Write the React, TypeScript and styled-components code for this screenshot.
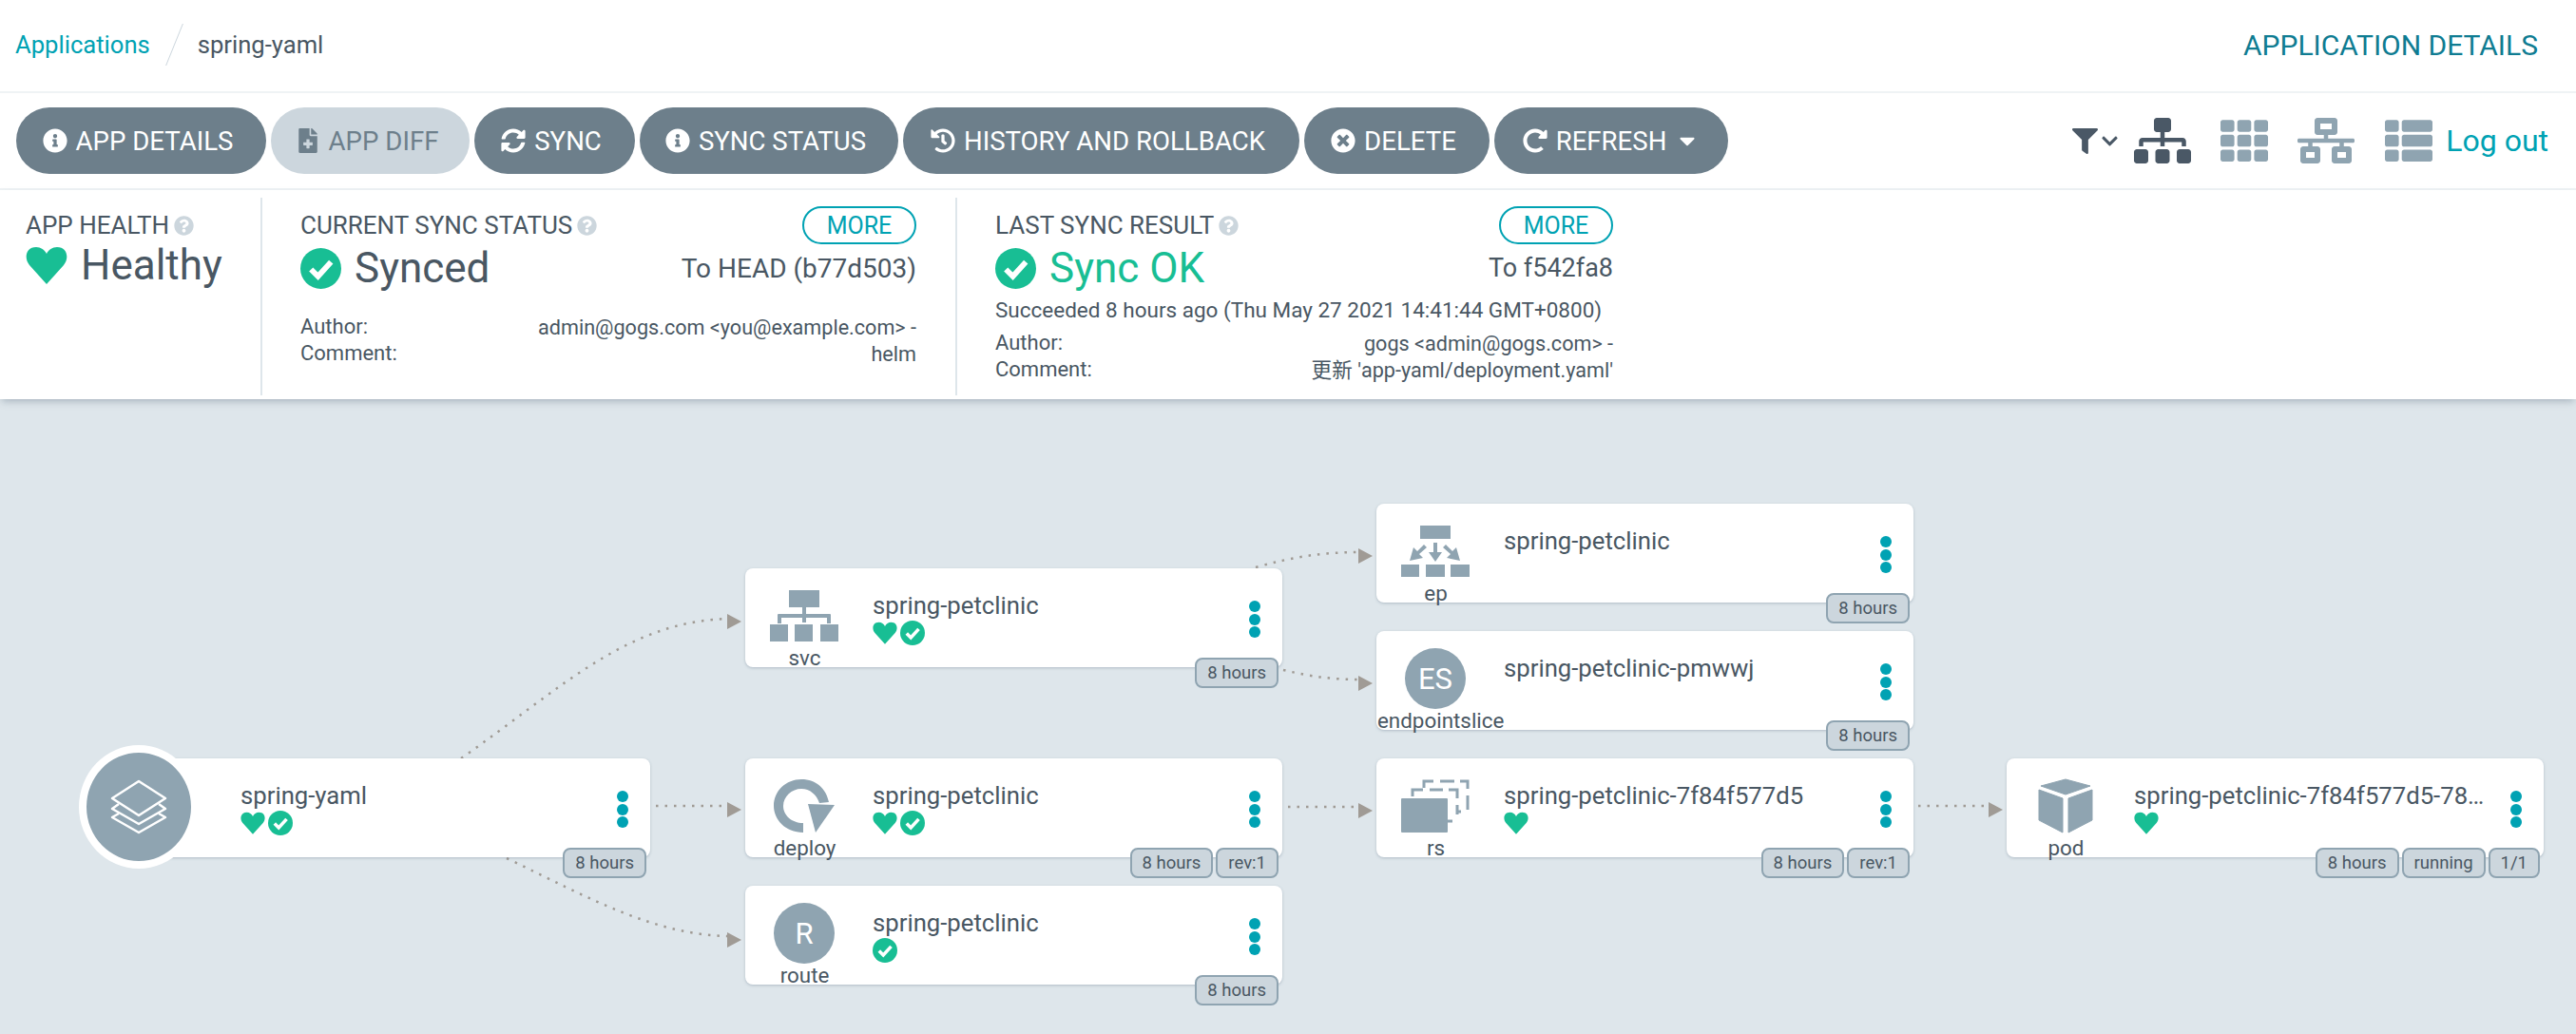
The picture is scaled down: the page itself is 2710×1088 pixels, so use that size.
import React from 'react';
import styled, { createGlobalStyle } from 'styled-components';
import {
  FaCaretDown,
  FaChevronDown,
  FaFileMedical,
  FaFilter,
  FaHistory,
  FaInfoCircle,
  FaNetworkWired,
  FaQuestionCircle,
  FaRedoAlt,
  FaSitemap,
  FaSyncAlt,
  FaTh,
  FaThList,
  FaTimesCircle,
} from 'react-icons/fa';

const GREEN = '#18be94';
const CYAN = '#00a2b3';
const TEXT = '#495763';
const GREY = '#8fa4b1';

const GlobalStyle = createGlobalStyle`
  html, body {
    margin: 0;
    padding: 0;
    background: #fff;
    font-family: Roboto, "Noto Sans CJK SC", sans-serif;
    color: ${TEXT};
  }
  * { box-sizing: border-box; }
`;

const Page = styled.div`
  width: 2710px;
  height: 1088px;
  display: flex;
  flex-direction: column;
  overflow: hidden;
`;

const TopBar = styled.div`
  height: 98px;
  flex: none;
  display: flex;
  align-items: center;
  justify-content: space-between;
  padding: 0 40px 2px 16px;
  border-bottom: 2px solid #eff3f5;
`;

const Crumbs = styled.div`
  display: flex;
  align-items: center;
  font-size: 25.6px;
`;

const CrumbLink = styled.span`
  color: ${CYAN};
`;

const CrumbSlash = styled.span`
  width: 1px;
  height: 44px;
  margin: 0 24px 0 25px;
  background: #ccd6dd;
  transform: skewX(-22deg);
`;

const PageTitle = styled.div`
  color: #0f7c92;
  font-size: 30px;
`;

const Toolbar = styled.div`
  height: 102px;
  flex: none;
  display: flex;
  align-items: center;
  justify-content: space-between;
  padding: 0 29px 0 17px;
  border-bottom: 2px solid #eff3f5;
`;

const ActionRow = styled.div`
  display: flex;
  gap: 5px;
`;

const ActionButton = styled.button<{ $disabled?: boolean; $w: number; $pr?: number }>`
  width: ${(p) => p.$w}px;
  height: 70px;
  border: 0;
  border-radius: 35px;
  display: flex;
  align-items: center;
  justify-content: center;
  gap: 9px;
  padding: 0 ${(p) => p.$pr ?? 7}px 0 0;
  font-family: inherit;
  font-size: 27.6px;
  white-space: nowrap;
  background: ${(p) => (p.$disabled ? '#ccd6dd' : '#6d7f8b')};
  color: ${(p) => (p.$disabled ? '#6d7f8b' : '#fff')};
  svg {
    font-size: 26px;
    flex: none;
  }
`;

const ViewRow = styled.div`
  display: flex;
  align-items: center;
`;

const ViewIcon = styled.span<{ $active?: boolean; $size: number; $ml: number }>`
  display: flex;
  margin-left: ${(p) => p.$ml}px;
  font-size: ${(p) => p.$size}px;
  color: ${(p) => (p.$active ? '#4a5866' : GREY)};
`;

const LogOut = styled.span`
  margin-left: 14px;
  color: ${CYAN};
  font-size: 32px;
`;

const Stats = styled.div`
  height: 220px;
  flex: none;
  display: flex;
  padding: 8px 0 4px;
  background: #fff;
  box-shadow: 0 4px 8px -2px rgba(60, 80, 100, 0.35);
  position: relative;
  z-index: 1;
`;

const HealthBlock = styled.div`
  width: 276px;
  padding: 14px 0 0 27px;
  border-right: 2px solid #dee6eb;
`;

const SyncBlock = styled.div<{ $last?: boolean }>`
  width: 731px;
  padding: 9px 41px 0 40px;
  border-right: ${(p) => (p.$last ? '0' : '2px solid #dee6eb')};
`;

const SectionHead = styled.div`
  display: flex;
  align-items: center;
  justify-content: space-between;
  height: 40px;
`;

const Label = styled.span`
  display: inline-flex;
  align-items: center;
  gap: 5px;
  font-size: 26px;
  svg {
    color: #ccd6dd;
    font-size: 21px;
  }
`;

const MoreButton = styled.span`
  width: 120px;
  height: 40px;
  border: 2px solid ${CYAN};
  border-radius: 20px;
  display: flex;
  align-items: center;
  justify-content: center;
  color: ${CYAN};
  font-size: 25px;
`;

const BigRow = styled.div<{ $mt?: number }>`
  display: flex;
  align-items: center;
  justify-content: space-between;
  height: 50px;
  margin-top: ${(p) => p.$mt ?? 0}px;
`;

const BigStatus = styled.span<{ $color?: string }>`
  display: flex;
  align-items: center;
  gap: 14px;
  font-size: 44px;
  color: ${(p) => p.$color || TEXT};
  svg {
    flex: none;
  }
`;

const Revision = styled.span<{ $size: number }>`
  font-size: ${(p) => p.$size}px;
`;

const Succeeded = styled.div`
  margin-top: 5px;
  font-size: 22.5px;
  line-height: 28px;
`;

const MetaGrid = styled.div<{ $mt: number }>`
  margin-top: ${(p) => p.$mt}px;
  display: flex;
  justify-content: space-between;
  font-size: 22px;
  line-height: 28px;
`;

const MetaValue = styled.div`
  text-align: right;
  padding-top: 1px;
  font-size: 21.6px;
`;

const Graph = styled.div`
  flex: 1;
  position: relative;
  background: #dee6eb;
`;

const EdgeLayer = styled.svg`
  position: absolute;
  left: 0;
  top: 0;
`;

const Card = styled.div<{ $x: number; $y: number }>`
  position: absolute;
  left: ${(p) => p.$x}px;
  top: ${(p) => p.$y}px;
  width: 565px;
  height: 104px;
  display: flex;
  background: #fff;
  border-radius: 8px;
  box-shadow: 0 1px 3px rgba(90, 110, 130, 0.35);
`;

const IconCol = styled.div`
  width: 124px;
  flex: none;
  padding-top: 18px;
  text-align: center;
  margin-right: 10px;
`;

const IconBox = styled.div`
  height: 64px;
  display: flex;
  align-items: center;
  justify-content: center;
`;

const KindLabel = styled.div`
  font-size: 22.4px;
  line-height: 24px;
  white-space: nowrap;
  padding-left: 1px;
`;

const Letters = styled.div`
  width: 64px;
  height: 64px;
  border-radius: 50%;
  background: ${GREY};
  color: #fff;
  font-size: 31px;
  display: flex;
  align-items: center;
  justify-content: center;
`;

const Info = styled.div`
  flex: 1;
  min-width: 0;
  padding-top: 24px;
`;

const Title = styled.div`
  font-size: 25.7px;
  line-height: 30px;
  height: 31px;
  white-space: nowrap;
  overflow: hidden;
  text-overflow: ellipsis;
`;

const StatusRow = styled.div`
  display: flex;
  align-items: center;
  gap: 3px;
`;

const Menu = styled.div`
  width: 58px;
  flex: none;
  padding-top: 34px;
  display: flex;
  flex-direction: column;
  align-items: center;
  gap: 1.5px;
`;

const Dot = styled.span`
  width: 12px;
  height: 12px;
  border-radius: 50%;
  background: ${CYAN};
`;

const Tags = styled.div`
  position: absolute;
  right: 4px;
  bottom: -22px;
  display: flex;
  gap: 3px;
`;

const Tag = styled.span`
  height: 32px;
  padding: 0 11px;
  display: flex;
  align-items: center;
  border: 2px solid ${GREY};
  border-radius: 8px;
  background: #ccd6dd;
  font-size: 18.5px;
`;

const AppCircle = styled.div`
  position: absolute;
  left: -36px;
  top: -14px;
  width: 126px;
  height: 130px;
  border-radius: 50%;
  background: ${GREY};
  border: 8px solid #fff;
  display: flex;
  align-items: center;
  justify-content: center;
`;

const Heart = ({ size }: { size: number }) => (
  <svg width={size} height={size} viewBox="0 0 44 44" fill={GREEN}>
    <path d="M22 42 L4 22 C-2 15 0 3 11 3 C16 3 20 6 22 10 C24 6 28 3 33 3 C44 3 46 15 40 22 Z" />
  </svg>
);

const Check = ({ size }: { size: number }) => (
  <svg width={size} height={size} viewBox="0 0 44 44">
    <circle cx="22" cy="22" r="22" fill={GREEN} />
    <path d="M11.5 23 L19 30.5 L33 15" fill="none" stroke="#fff" strokeWidth="6" />
  </svg>
);

const Layers = () => (
  <svg width="60" height="58" viewBox="0 0 60 58" fill="none" stroke="#fff" strokeWidth="2.5" strokeLinejoin="round">
    <path d="M30 2 L58 20 L30 38 L2 20 Z" />
    <path d="M9 26 L2 31 L30 47 L58 31 L51 26" />
    <path d="M9 36 L2 40 L30 56 L58 40 L51 36" />
  </svg>
);

const SvcIcon = () => (
  <svg width="72" height="54" viewBox="0 0 72 54" fill={GREY}>
    <rect x="20" y="0" width="32" height="18" />
    <rect x="0" y="36" width="19" height="18" />
    <rect x="26" y="36" width="19" height="18" />
    <rect x="53" y="36" width="19" height="18" />
    <path d="M34 18h4v16h-4z" />
    <path d="M8 35v-9a1 1 0 0 1 1-1h54a1 1 0 0 1 1 1v9h-4v-6H12v6z" />
  </svg>
);

const EpIcon = () => (
  <svg width="72" height="54" viewBox="0 0 72 54" fill={GREY}>
    <rect x="20" y="0" width="32" height="14" />
    <rect x="0" y="41" width="19" height="14" />
    <rect x="26" y="41" width="20" height="14" />
    <rect x="52" y="41" width="20" height="14" />
    <path d="M34 18h4v10h5l-7 10-7-10h5z" />
    <path d="M24 20l3 3-8 7 4 4-14 3 4-14 4 4z" />
    <path d="M47 20l-3 3 8 7-4 4 14 3-4-14-4 4z" />
  </svg>
);

const DeployIcon = () => (
  <svg width="64" height="56" viewBox="0 0 64 56" fill={GREY}>
    <path d="M31 56 C12 56 0 42 0 28 C0 12 13 0 29 0 C45 0 55 10 58 24 L48 25 C45 16 38 10 29 10 C19 10 10 18 10 28 C10 38 19 46 31 46 Z" />
    <path d="M36 26 L64 27 L44 56 Z" />
  </svg>
);

const RsIcon = () => (
  <svg width="74" height="56" viewBox="0 0 74 56">
    <rect x="1" y="20" width="49" height="36" rx="1" fill={GREY} />
    <path
      d="M25 9V2H35 M42 2H57 M63 2H71V10 M71 17V32 M13 18V11H24 M31 11H45 M51 11H60V20 M60 27V37 M60 34H64 M50 44H55"
      fill="none"
      stroke={GREY}
      strokeWidth="3"
    />
  </svg>
);

const PodIcon = () => (
  <svg width="58" height="58" viewBox="0 0 58 58" fill={GREY} stroke={GREY} strokeWidth="1" strokeLinejoin="round">
    <path d="M29 1 L55 8 L29 17 L3 8 Z" />
    <path d="M1 12 L26 21 V57 L1 44 Z" />
    <path d="M57 12 L32 21 V57 L57 44 Z" />
  </svg>
);

interface NodeProps {
  x: number;
  y: number;
  kind?: string;
  icon?: React.ReactNode;
  name: string;
  heart?: boolean;
  check?: boolean;
  tags: string[];
  children?: React.ReactNode;
}

const GRAPH_TOP = 420;

const Node = ({ x, y, kind, icon, name, heart, check, tags, children }: NodeProps) => (
  <Card $x={x} $y={y - GRAPH_TOP}>
    {children}
    <IconCol>
      <IconBox>{icon}</IconBox>
      {kind && <KindLabel>{kind}</KindLabel>}
    </IconCol>
    <Info>
      <Title>{name}</Title>
      <StatusRow>
        {heart && <Heart size={26} />}
        {check && <Check size={26} />}
      </StatusRow>
    </Info>
    <Menu>
      <Dot />
      <Dot />
      <Dot />
    </Menu>
    <Tags>
      {tags.map((t) => (
        <Tag key={t}>{t}</Tag>
      ))}
    </Tags>
  </Card>
);

const edges = [
  'M485 798 C590 725 660 652 770 651',
  'M690 848 H770',
  'M533 903 C620 945 690 985 770 985',
  'M1321 597 C1360 586 1390 581 1432 581',
  'M1350 705 C1380 712 1400 715 1432 715',
  'M1355 849 H1432',
  'M2018 848 H2095',
];

const arrows: [number, number][] = [
  [780, 654],
  [780, 852],
  [780, 989],
  [1444, 585],
  [1444, 719],
  [1444, 853],
  [2107, 852],
];

const actions = [
  { label: 'APP DETAILS', w: 263, icon: <FaInfoCircle /> },
  { label: 'APP DIFF', w: 209, icon: <FaFileMedical />, disabled: true },
  { label: 'SYNC', w: 169, icon: <FaSyncAlt /> },
  { label: 'SYNC STATUS', w: 272, icon: <FaInfoCircle /> },
  { label: 'HISTORY AND ROLLBACK', w: 417, icon: <FaHistory /> },
  { label: 'DELETE', w: 195, icon: <FaTimesCircle /> },
  { label: 'REFRESH', w: 246, icon: <FaRedoAlt />, caret: true, pr: 0 },
];

const App = () => (
  <Page>
    <GlobalStyle />
    <TopBar>
      <Crumbs>
        <CrumbLink>Applications</CrumbLink>
        <CrumbSlash />
        <span>spring-yaml</span>
      </Crumbs>
      <PageTitle>APPLICATION DETAILS</PageTitle>
    </TopBar>
    <Toolbar>
      <ActionRow>
        {actions.map((a) => (
          <ActionButton key={a.label} $w={a.w} $disabled={a.disabled} $pr={a.pr}>
            {a.icon}
            {a.label}
            {a.caret && <FaCaretDown />}
          </ActionButton>
        ))}
      </ActionRow>
      <ViewRow>
        <ViewIcon $active $size={27} $ml={0}>
          <FaFilter />
        </ViewIcon>
        <ViewIcon $active $size={19} $ml={3}>
          <FaChevronDown />
        </ViewIcon>
        <ViewIcon $active $size={60} $ml={16}>
          <FaSitemap />
        </ViewIcon>
        <ViewIcon $size={50} $ml={31}>
          <FaTh />
        </ViewIcon>
        <ViewIcon $size={60} $ml={31}>
          <FaNetworkWired />
        </ViewIcon>
        <ViewIcon $size={50} $ml={32}>
          <FaThList />
        </ViewIcon>
        <LogOut>Log out</LogOut>
      </ViewRow>
    </Toolbar>
    <Stats>
      <HealthBlock>
        <Label>
          APP HEALTH <FaQuestionCircle />
        </Label>
        <BigRow $mt={2}>
          <BigStatus>
            <Heart size={44} />
            Healthy
          </BigStatus>
        </BigRow>
      </HealthBlock>
      <SyncBlock>
        <SectionHead>
          <Label>
            CURRENT SYNC STATUS <FaQuestionCircle />
          </Label>
          <MoreButton>MORE</MoreButton>
        </SectionHead>
        <BigRow>
          <BigStatus>
            <Check size={43} />
            Synced
          </BigStatus>
          <Revision $size={28}>To HEAD (b77d503)</Revision>
        </BigRow>
        <MetaGrid $mt={23}>
          <div>
            Author:
            <br />
            Comment:
          </div>
          <MetaValue>
            admin@gogs.com &lt;you@example.com&gt; -
            <br />
            helm
          </MetaValue>
        </MetaGrid>
      </SyncBlock>
      <SyncBlock $last>
        <SectionHead>
          <Label>
            LAST SYNC RESULT <FaQuestionCircle />
          </Label>
          <MoreButton>MORE</MoreButton>
        </SectionHead>
        <BigRow>
          <BigStatus $color={GREEN}>
            <Check size={43} />
            Sync OK
          </BigStatus>
          <Revision $size={27}>To f542fa8</Revision>
        </BigRow>
        <Succeeded>Succeeded 8 hours ago (Thu May 27 2021 14:41:44 GMT+0800)</Succeeded>
        <MetaGrid $mt={7}>
          <div>
            Author:
            <br />
            Comment:
          </div>
          <MetaValue>
            gogs &lt;admin@gogs.com&gt; -
            <br />
            更新 'app-yaml/deployment.yaml'
          </MetaValue>
        </MetaGrid>
      </SyncBlock>
    </Stats>
    <Graph>
      <EdgeLayer width="2710" height="668" viewBox={`0 ${GRAPH_TOP} 2710 668`}>
        {edges.map((d) => (
          <path key={d} d={d} fill="none" stroke="#a09b95" strokeWidth="2.5" strokeDasharray="2.5 7" />
        ))}
        {arrows.map(([x, y]) => (
          <polygon key={`${x}-${y}`} points={`${x},${y} ${x - 15},${y - 8} ${x - 15},${y + 8}`} fill="#a09b95" />
        ))}
      </EdgeLayer>
      <Node x={119} y={798} name="spring-yaml" heart check tags={['8 hours']}>
        <AppCircle>
          <Layers />
        </AppCircle>
      </Node>
      <Node x={784} y={598} kind="svc" icon={<SvcIcon />} name="spring-petclinic" heart check tags={['8 hours']} />
      <Node x={784} y={798} kind="deploy" icon={<DeployIcon />} name="spring-petclinic" heart check tags={['8 hours', 'rev:1']} />
      <Node x={784} y={932} kind="route" icon={<Letters>R</Letters>} name="spring-petclinic" check tags={['8 hours']} />
      <Node x={1448} y={530} kind="ep" icon={<EpIcon />} name="spring-petclinic" tags={['8 hours']} />
      <Node x={1448} y={664} kind="endpointslice" icon={<Letters>ES</Letters>} name="spring-petclinic-pmwwj" tags={['8 hours']} />
      <Node x={1448} y={798} kind="rs" icon={<RsIcon />} name="spring-petclinic-7f84f577d5" heart tags={['8 hours', 'rev:1']} />
      <Node
        x={2111}
        y={798}
        kind="pod"
        icon={<PodIcon />}
        name="spring-petclinic-7f84f577d5-78xkq5tz"
        heart
        tags={['8 hours', 'running', '1/1']}
      />
    </Graph>
  </Page>
);

export default App;
